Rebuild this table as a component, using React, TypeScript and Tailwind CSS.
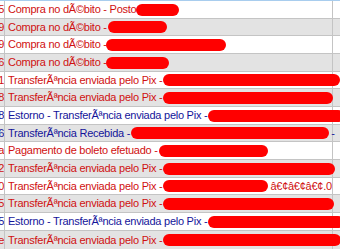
import React from "react";

type Row = {
  lead: string;
  text: string;
  blue?: boolean;
  blobW: number;
  blobMl?: number;
  tail?: string;
  h: string;
};

const rows: Row[] = [
  { lead: "5", text: "Compra no d\u00c3\u00a9bito - Posto", blobW: 43, blobMl: -1, h: "h-[18px]" },
  { lead: "9", text: "Compra no d\u00c3\u00a9bito -", blobW: 59, h: "h-[17px]" },
  { lead: "9", text: "Compra no d\u00c3\u00a9bito -", blobW: 120, blobMl: -2, h: "h-[18px]" },
  { lead: "6", text: "Compra no d\u00c3\u00a9bito -", blobW: 63, blobMl: -2, h: "h-[18px]" },
  { lead: "1", text: "Transfer\u00c3\u00aancia enviada pelo Pix -", blobW: 177, h: "h-[17px]" },
  { lead: "8", text: "Transfer\u00c3\u00aancia enviada pelo Pix -", blobW: 170, h: "h-[18px]" },
  { lead: "8", text: "Estorno - Transfer\u00c3\u00aancia enviada pelo Pix -", blue: true, blobW: 136, h: "h-[18px]" },
  { lead: "6", text: "Transfer\u00c3\u00aancia Recebida -", blue: true, blobW: 198, tail: "-", h: "h-[17px]" },
  { lead: "a", text: "Pagamento de boleto efetuado -", blobW: 109, h: "h-[18px]" },
  { lead: "2", text: "Transfer\u00c3\u00aancia enviada pelo Pix -", blobW: 172, h: "h-[18px]" },
  { lead: "0", text: "Transfer\u00c3\u00aancia enviada pelo Pix -", blobW: 105, tail: "\u00e2\u20ac\u00a2\u00e2\u20ac\u00a2\u00e2\u20ac\u00a2.0", h: "h-[17px]" },
  { lead: "5", text: "Transfer\u00c3\u00aancia enviada pelo Pix -", blobW: 171, h: "h-[18px]" },
  { lead: "5", text: "Estorno - Transfer\u00c3\u00aancia enviada pelo Pix -", blue: true, blobW: 136, h: "h-[18px]" },
  { lead: "e", text: "Transfer\u00c3\u00aancia enviada pelo Pix -", blobW: 178, h: "h-[19px]" },
];

export default function App() {
  return (
    <div
      className="w-[340px] h-[249px] overflow-hidden bg-white border-t border-[#a8cdee] text-[11px] tracking-[-0.25px]"
      style={{ fontFamily: '"Liberation Sans", Arial, sans-serif' }}
    >
      {rows.map((r, i) => {
        const grey = i % 2 === 1;
        const color = r.blue ? "text-[#14149a]" : "text-[#d01010]";
        return (
          <div
            key={i}
            className={`flex ${r.h} border-b border-[#c4c4c4] ${grey ? "bg-[#e3e3e3]" : "bg-white"} ${color}`}
          >
            <div className="w-[5px] shrink-0 overflow-hidden border-r border-[#c4c4c4] flex items-center justify-end">
              <span className="leading-none">{r.lead}</span>
            </div>
            <div className="w-[328px] shrink-0 border-r border-[#c4c4c4] flex items-center pl-[3px] whitespace-nowrap overflow-visible relative z-10">
              <span className="leading-none">{r.text}</span>
              <span
                className="inline-block h-[12px] rounded-full bg-[#ff0000] shrink-0"
                style={{ width: r.blobW, marginLeft: (r.blobMl ?? 0) + 1 }}
              />
              {r.tail && <span className="leading-none ml-[2px]">{r.tail}</span>}
            </div>
            <div className="flex-1" />
          </div>
        );
      })}
    </div>
  );
}
